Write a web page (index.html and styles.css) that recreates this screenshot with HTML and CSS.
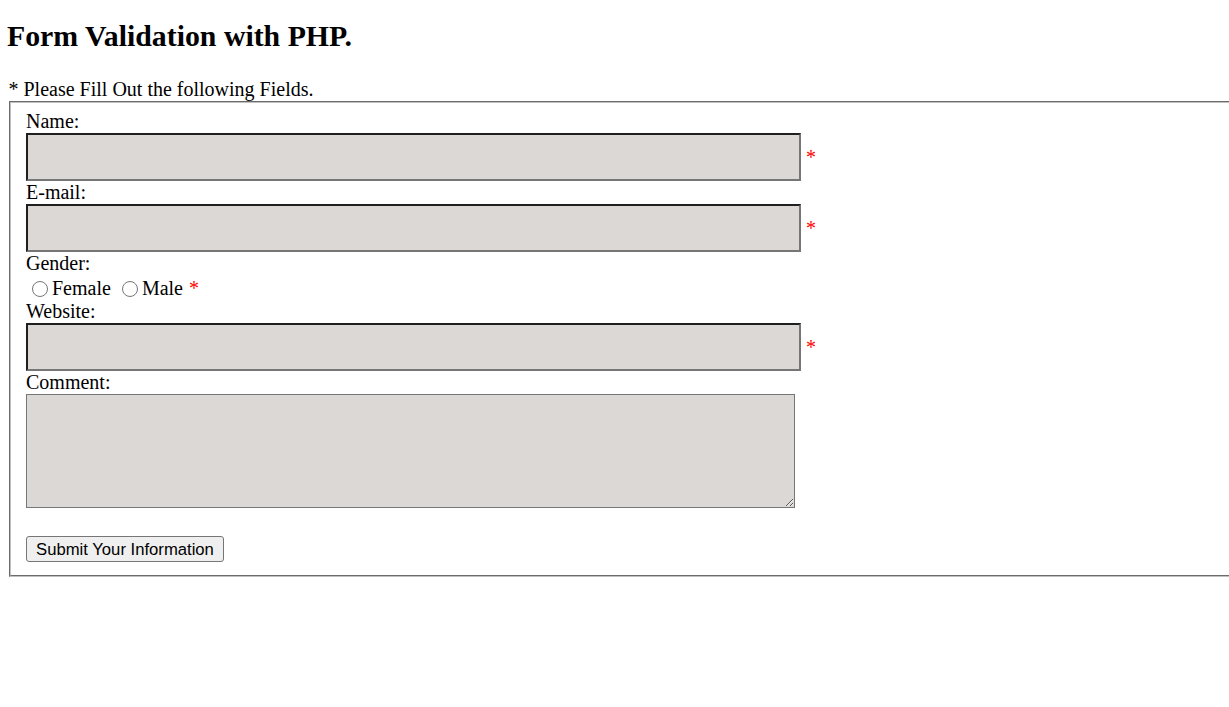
FILE: index.html
```html
<!DOCTYPE html>
<html lang="en">
<head>
<meta charset="utf-8">
<title>Form Validation with PHP</title>
<link rel="stylesheet" href="styles.css">
</head>
<body>
<div class="page">
  <h2 class="title">Form Validation with PHP.</h2>
  <p class="intro">* Please Fill Out the following Fields.</p>
  <form class="form" action="#" onsubmit="return false;">
    <fieldset class="panel">
      <div class="label">Name:</div>
      <div class="field-row">
        <input class="text-input" type="text" name="name">
        <span class="req">*</span>
      </div>
      <div class="label">E-mail:</div>
      <div class="field-row">
        <input class="text-input" type="text" name="email">
        <span class="req">*</span>
      </div>
      <div class="label">Gender:</div>
      <div class="radio-row">
        <input class="radio" type="radio" name="gender" value="female"><span class="radio-text">Female</span>
        <input class="radio" type="radio" name="gender" value="male"><span class="radio-text">Male</span>
        <span class="req req-inline">*</span>
      </div>
      <div class="label">Website:</div>
      <div class="field-row">
        <input class="text-input" type="text" name="website">
        <span class="req">*</span>
      </div>
      <div class="label">Comment:</div>
      <div class="area-row">
        <textarea class="comment" name="comment"></textarea>
      </div>
      <div class="submit-row">
        <button class="submit" type="submit">Submit Your Information</button>
      </div>
    </fieldset>
  </form>
</div>
</body>
</html>
```

FILE: styles.css
```css
html {
  overflow-x: hidden;
  background: #ffffff;
}

body {
  margin: 0;
  font-family: "Liberation Serif", "Times New Roman", serif;
  font-size: 20px;
  line-height: 23px;
  color: #000000;
}

.page {
  padding-left: 7px;
  overflow: hidden;
}

.title {
  margin: 19px 0 0;
  font-size: 29.8px;
  line-height: 34px;
  font-weight: bold;
}

.intro {
  margin: 25px 0 0 1.5px;
  height: 23px;
}

.form {
  margin: 0;
}

.panel {
  margin: 0 0 0 2px;
  width: 1280px;
  padding: 7px 15px 12.5px;
  border: 2px groove #c0c0c0;
  box-sizing: content-box;
}

.label {
  height: 23px;
  line-height: 23px;
}

.field-row {
  display: flex;
  align-items: baseline;
  height: 48px;
}

.text-input {
  width: 775px;
  height: 48px;
  box-sizing: border-box;
  margin: 0;
  padding: 0 4px;
  border-width: 2px;
  border-style: solid;
  border-color: #1f1f1f #767676 #767676 #1f1f1f;
  background: #dcd8d5;
  font-family: "Liberation Serif", serif;
  font-size: 20px;
  line-height: 23px;
  outline: none;
}

.req {
  color: #ff0000;
  margin-left: 5px;
  line-height: 23px;
}

.req-inline {
  margin-left: 1px;
}

.radio-row {
  display: flex;
  align-items: baseline;
  height: 23px;
  padding-top: 2px;
  white-space: pre;
}

.radio {
  width: 16px;
  height: 16px;
  margin: 0 4px 0 6px;
  align-self: flex-end;
  position: relative;
  top: -3px;
}

.radio-text {
  margin-right: 5px;
}

.area-row {
  height: 114px;
  padding-bottom: 5px;
}

.comment {
  display: block;
  width: 769px;
  height: 114px;
  box-sizing: border-box;
  margin: 0;
  border: 1px solid #767676;
  background: #dcd8d5;
  font-family: "Liberation Mono", monospace;
  font-size: 16px;
}

.submit-row {
  padding-top: 23px;
  height: 26px;
}

.submit {
  display: block;
  width: 198px;
  height: 26px;
  box-sizing: border-box;
  margin: 0;
  padding: 1px 6px 0;
  border: 1px solid #767676;
  border-radius: 3px;
  background: #efefef;
  font-family: "Liberation Sans", Arial, sans-serif;
  font-size: 16.67px;
  line-height: 20px;
  color: #000000;
  white-space: nowrap;
}
```
